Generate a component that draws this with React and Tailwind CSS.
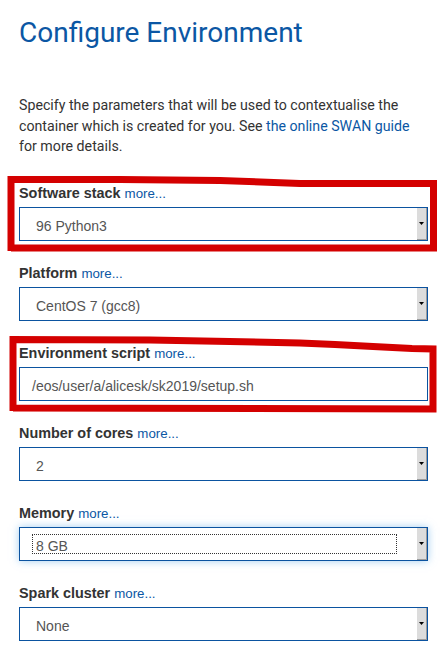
import React from "react";

const sans = { fontFamily: '"Liberation Sans", Arial, sans-serif' };
const roboto = { fontFamily: 'Roboto, "Liberation Sans", sans-serif' };

function Label({ text }) {
  return (
    <div className="h-5 leading-5 text-[14.4px] font-bold text-[#333]" style={sans}>
      {text}{" "}
      <span className="font-normal text-[13.3px] text-[#0b57a4]">more...</span>
    </div>
  );
}

function Select({ value, focused }) {
  return (
    <div
      className={
        "mt-1 h-[34px] border border-[#0b53a0] bg-white flex " +
        (focused ? "shadow-[0_0_8px_rgba(102,175,233,0.6)]" : "")
      }
    >
      <div className="flex-1 relative">
        {focused && (
          <div className="absolute left-[12px] right-[20px] top-[6px] h-[20px] border border-dotted border-[#333]" />
        )}
        <div
          className="pl-[16px] pt-[10px] leading-[16px] text-[14px] text-[#555]"
          style={sans}
        >
          {value}
        </div>
      </div>
      <div className="w-[10px] bg-[#dcdcdc] border-r border-b border-[#9c9c9c] flex items-start justify-center pt-[14px]">
        <svg width="5" height="3" viewBox="0 0 5 3">
          <path d="M0 0H5L2.5 3Z" fill="#000" />
        </svg>
      </div>
    </div>
  );
}

function Input({ value }) {
  return (
    <div className="mt-1 h-[34px] border border-[#0b53a0] bg-white">
      <div
        className="pl-[12px] pt-[10px] leading-[16px] text-[14px] text-[#555]"
        style={sans}
      >
        {value}
      </div>
    </div>
  );
}

export default function App() {
  return (
    <div className="relative w-[447px] h-[656px] bg-white overflow-hidden">
      <div className="px-[19px] flex flex-col">
        <h1
          className="mt-[16px] h-[34px] leading-[34px] text-[28px] text-[#0b57a4] font-normal"
          style={roboto}
        >
          Configure Environment
        </h1>
        <p className="mt-[45px] w-[409px] text-[14.2px] leading-[20.5px] text-[#333]" style={roboto}>
          Specify the parameters that will be used to contextualise the container which is created for you. See{" "}
          <span className="text-[#0b57a4]">the online SWAN guide</span> for more details.
        </p>
        <div className="mt-[26px]">
          <Label text="Software stack" />
          <Select value="96 Python3" />
        </div>
        <div className="mt-[22px]">
          <Label text="Platform" />
          <Select value="CentOS 7 (gcc8)" />
        </div>
        <div className="mt-[22px]">
          <Label text="Environment script" />
          <Input value="/eos/user/a/alicesk/sk2019/setup.sh" />
        </div>
        <div className="mt-[22px]">
          <Label text="Number of cores" />
          <Select value="2" />
        </div>
        <div className="mt-[22px]">
          <Label text="Memory" />
          <Select value="8 GB" focused />
        </div>
        <div className="mt-[22px]">
          <Label text="Spark cluster" />
          <Select value="None" />
        </div>
      </div>
      <svg
        className="absolute left-0 top-0 pointer-events-none"
        width="447"
        height="656"
        viewBox="0 0 447 656"
      >
        <polyline
          points="11,251 11,179.5 120,179.5 220,180.5 300,183.5 433.5,183.5 433.5,248 11,248"
          fill="none"
          stroke="#d40000"
          strokeWidth="7"
          strokeLinejoin="miter"
        />
        <polyline
          points="13,411 13,339.5 150,340 300,343 335,344.5 373,346.5 412,348.5 433,349 433,409 13,408"
          fill="none"
          stroke="#d40000"
          strokeWidth="7"
          strokeLinejoin="miter"
        />
      </svg>
    </div>
  );
}
